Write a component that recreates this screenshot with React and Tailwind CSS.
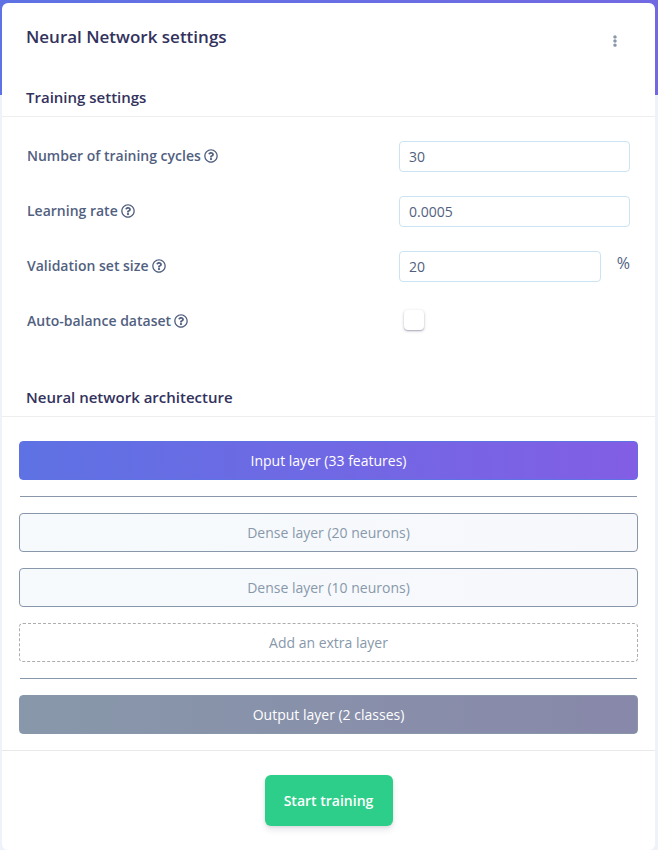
import React, { useState } from 'react';
import { FaEllipsisV, FaRegQuestionCircle } from 'react-icons/fa';

const inputClass =
    'block h-[31px] w-full min-w-0 rounded-[4px] border border-[#cbe4f3] bg-white px-[9px] text-sm text-[#525f7f] outline-none focus:border-[#5e72e4]';

const SectionHeader = ({ children }) => (
    <div className="border-b border-[#eeeeef] px-6 pb-2">
        <h3 className="text-[15px] leading-[22px] font-semibold text-[#32325d]">{children}</h3>
    </div>
);

const SettingRow = ({ id, label, children }) => (
    <div className="grid grid-cols-[8fr_5fr]">
        <div className="flex h-[30px] items-center gap-[3px] text-sm font-semibold text-[#525f7f]">
            <label htmlFor={id}>{label}</label>
            <button type="button" aria-label={`Help: ${label}`}>
                <FaRegQuestionCircle size={14} />
            </button>
        </div>
        <div className="flex h-[31px] items-center pl-px">{children}</div>
    </div>
);

const layerBase = 'h-[39px] w-full rounded-[4px] border text-center text-sm';

const NeuralNetworkSettings = () => {
    const [cycles, setCycles] = useState('30');
    const [learningRate, setLearningRate] = useState('0.0005');
    const [validationSize, setValidationSize] = useState('20');
    const [autoBalance, setAutoBalance] = useState(false);
    const [layers] = useState([20, 10]);

    return (
        <div className="min-h-screen bg-[#eff2f8] bg-[linear-gradient(90deg,#5e72e4,#7269e2)] bg-[length:100%_95px] bg-no-repeat pt-[3px] pr-[3px] pl-[2px] font-['Open_Sans',sans-serif]">
            <main className="rounded-[6px] bg-white">
                <header className="flex items-center justify-between px-6 pt-5">
                    <h2 className="text-[17px] leading-7 font-semibold text-[#32325d]">Neural Network settings</h2>
                    <button type="button" aria-label="More options" className="flex w-8 justify-center pt-[7px] text-[#8898aa]">
                        <FaEllipsisV size={12} />
                    </button>
                </header>

                <section className="pt-[35px]">
                    <SectionHeader>Training settings</SectionHeader>
                    <div className="flex flex-col gap-6 px-[25px] py-6">
                        <SettingRow id="cycles" label="Number of training cycles">
                            <input id="cycles" type="text" value={cycles} onChange={(e) => setCycles(e.target.value)} className={inputClass} />
                        </SettingRow>
                        <SettingRow id="learning-rate" label="Learning rate">
                            <input id="learning-rate" type="text" value={learningRate} onChange={(e) => setLearningRate(e.target.value)} className={inputClass} />
                        </SettingRow>
                        <SettingRow id="validation-size" label="Validation set size">
                            <input id="validation-size" type="text" value={validationSize} onChange={(e) => setValidationSize(e.target.value)} className={inputClass} />
                            <span className="pb-2 pl-4 text-base leading-6 text-[#525f7f]">%</span>
                        </SettingRow>
                        <SettingRow id="auto-balance" label="Auto-balance dataset">
                            <input
                                id="auto-balance"
                                type="checkbox"
                                checked={autoBalance}
                                onChange={(e) => setAutoBalance(e.target.checked)}
                                className="mb-[3px] ml-[5px] size-5 appearance-none rounded-[4px] bg-white shadow-[0_1px_3px_rgba(50,50,93,0.3),0_1px_1px_rgba(50,50,93,0.2)] checked:bg-[#5e72e4]"
                            />
                        </SettingRow>
                    </div>
                </section>

                <section className="pt-[25px]">
                    <SectionHeader>Neural network architecture</SectionHeader>
                    <div className="flex flex-col gap-4 px-[17px] pt-6 pb-4">
                        <button type="button" className={`${layerBase} border-[#5e72e4] bg-[linear-gradient(87deg,#5e72e4,#825ee4)] text-white`}>
                            Input layer (33 features)
                        </button>
                        <hr className="mx-px border-[#8898aa]" />
                        {layers.map((neurons) => (
                            <button key={neurons} type="button" className={`${layerBase} border-[#8898aa] bg-[linear-gradient(87deg,#f6fafd,#f7f8fc)] text-[#8898aa]`}>
                                Dense layer ({neurons} neurons)
                            </button>
                        ))}
                        <button type="button" className={`${layerBase} border-dashed border-[#adadad] text-[#8898aa]`}>
                            Add an extra layer
                        </button>
                        <hr className="mx-px border-[#8898aa]" />
                        <button type="button" className={`${layerBase} border-[#8898aa] bg-[linear-gradient(87deg,#8898aa,#8888aa)] text-white`}>
                            Output layer (2 classes)
                        </button>
                    </div>
                </section>

                <footer className="flex justify-center border-t border-[#e9e9ea] py-6">
                    <button type="button" className="h-[51px] min-w-32 rounded-md bg-[#2dce89] px-4 text-sm font-semibold text-white shadow-[0_4px_6px_rgba(50,50,93,0.11),0_1px_3px_rgba(0,0,0,0.08)]">
                        Start training
                    </button>
                </footer>
            </main>
        </div>
    );
};

export default NeuralNetworkSettings;
